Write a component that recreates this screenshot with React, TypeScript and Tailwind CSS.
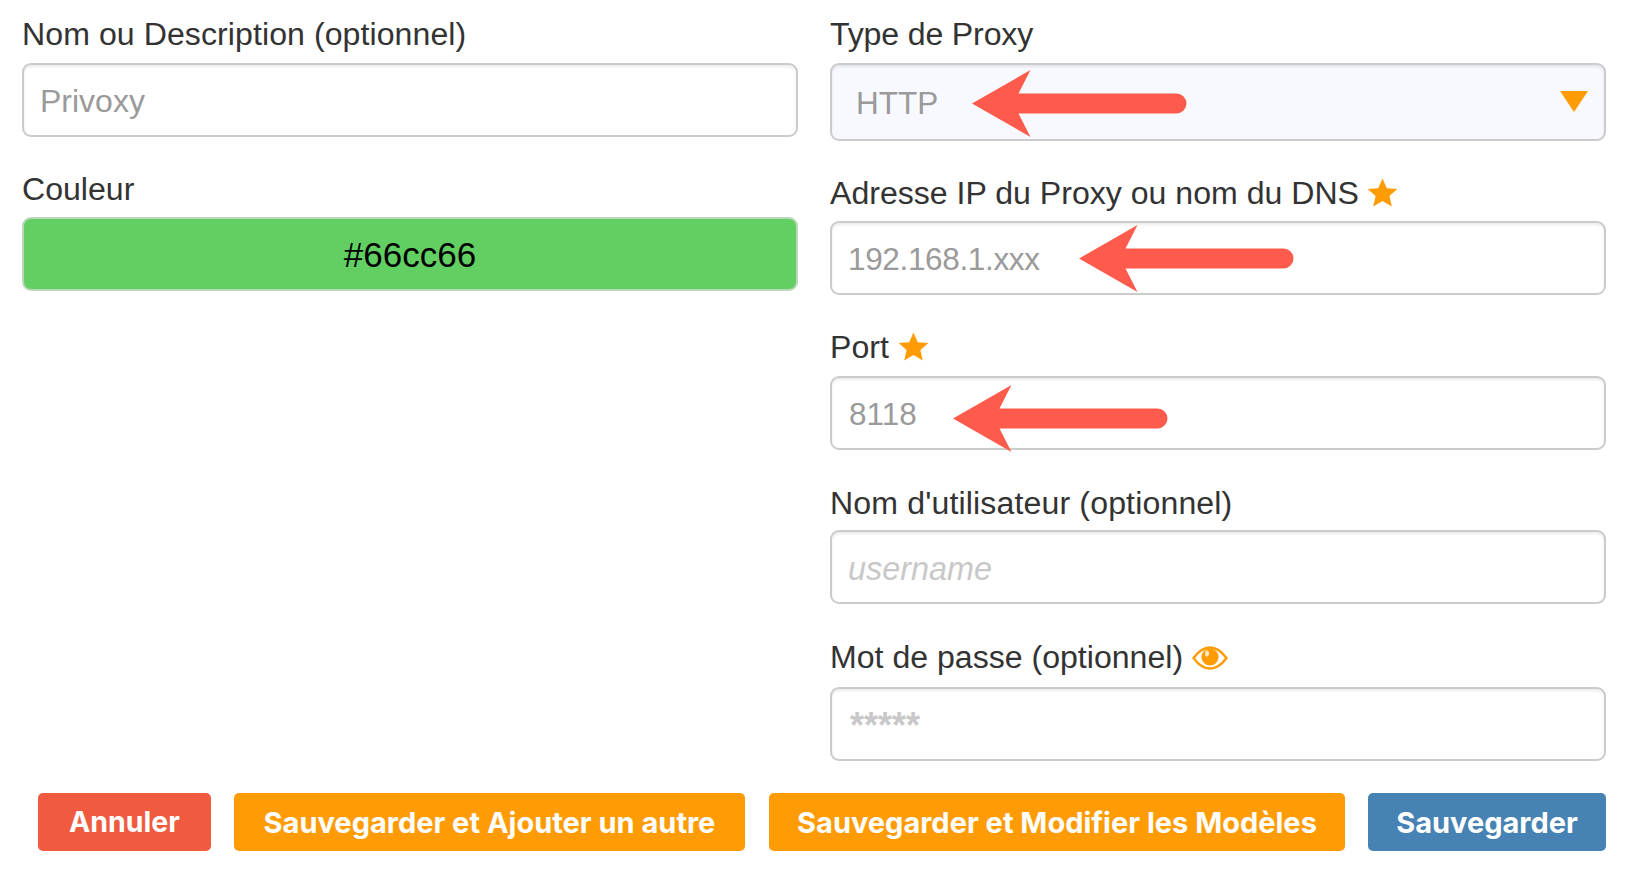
import React from "react";

function Arrow({ className }: { className: string }) {
  return (
    <svg className={`absolute ${className}`} width="215" height="67" viewBox="0 0 215 67" aria-hidden="true">
      <path d="M0 33.5 L58.5 0 L46.5 23.5 H204.5 A10 10 0 0 1 204.5 43.5 H46.5 L58.5 67 Z" fill="#ff5b4d" />
    </svg>
  );
}

function Star({ className = "" }: { className?: string }) {
  return (
    <svg className={className} width="31" height="29" viewBox="0 0 31 29" aria-hidden="true">
      <path
        d="M15.5 0.5 L19.8 10.2 L30.4 11.1 L22.4 18.1 L24.8 28.5 L15.5 23 L6.2 28.5 L8.6 18.1 L0.6 11.1 L11.2 10.2 Z"
        fill="#ff9c05"
      />
    </svg>
  );
}

function Eye() {
  return (
    <svg className="mt-[2px]" width="36" height="24" viewBox="0 0 36 24" aria-hidden="true">
      <path d="M1.5 12 C7 4.5 12.5 1.5 18 1.5 C23.5 1.5 29 4.5 34.5 12 C29 19.5 23.5 22.5 18 22.5 C12.5 22.5 7 19.5 1.5 12 Z" fill="none" stroke="#ff9c05" strokeWidth="2.4" />
      <circle cx="18" cy="11" r="8.6" fill="#ff9c05" />
      <ellipse cx="15" cy="7.5" rx="2" ry="3" fill="#ffe9c4" />
    </svg>
  );
}

const labelCls = "flex items-center gap-[9px] h-[40px] text-[32.1px] leading-[40px] text-[#333]";
const fieldCls =
  "relative flex items-center rounded-[9px] border-2 border-[#cbcbcb] pl-[16px] text-[31.5px] shadow-[inset_0_2px_3px_rgba(0,0,0,0.08)]";

export default function App() {
  return (
    <div className="w-[1626px] h-[874px] bg-white overflow-hidden pl-[22px] pr-[20px] pt-[14px] font-['Liberation_Sans',Arial,sans-serif]">
      <div className="grid grid-cols-[776px_776px] gap-x-[32px]">
        <div>
          <div className={`${labelCls} tracking-[0.07px]`}>Nom ou Description (optionnel)</div>
          <div className={`${fieldCls} mt-[9px] h-[74px] bg-white pt-[2px] text-[32px] text-[#9a9a9a]`}>Privoxy</div>
          <div className={`${labelCls} mt-[32px]`}>Couleur</div>
          <div className="mt-[8px] flex h-[74px] items-center justify-center rounded-[9px] border-2 border-[#bcd8bc] bg-[#62cf62] pt-[2px] text-[35px] text-black">
            #66cc66
          </div>
        </div>

        <div>
          <div className={`${labelCls} tracking-[-0.15px]`}>Type de Proxy</div>
          <div className={`${fieldCls} mt-[9px] h-[78px] bg-[#f8f9ff] pl-[24px] pt-[4px] text-[#9a9a9a]`}>
            HTTP
            <Arrow className="left-[140px] top-[5px]" />
            <svg className="absolute right-[16px] top-[26px]" width="28" height="21" viewBox="0 0 28 21" aria-hidden="true">
              <path d="M0 0 H28 L14 21 Z" fill="#ff9c05" />
            </svg>
          </div>
          <div className={`${labelCls} mt-[32px]`}>
            Adresse IP du Proxy ou nom du DNS <Star className="-mt-[2px] -ml-[1px]" />
          </div>
          <div className={`${fieldCls} mt-[8px] h-[74px] bg-white pt-[3px] tracking-[-0.35px] text-[#9a9a9a]`}>
            192.168.1.xxx
            <Arrow className="left-[247px] top-[2px]" />
          </div>
          <div className={`${labelCls} mt-[32px]`}>
            Port <Star className="-mt-[2px]" />
          </div>
          <div className={`${fieldCls} mt-[9px] h-[74px] bg-white pl-[17px] pt-[4px] text-[#9a9a9a]`}>
            8118
            <Arrow className="left-[121px] top-[7px]" />
          </div>
          <div className={`${labelCls} mt-[33px] tracking-[0.14px]`}>Nom d'utilisateur (optionnel)</div>
          <div className={`${fieldCls} mt-[7px] h-[74px] bg-white pt-[5px] text-[32.4px] italic text-[#c8c8c8]`}>username</div>
          <div className={`${labelCls} mt-[33px]`}>
            Mot de passe (optionnel) <Eye />
          </div>
          <div className={`${fieldCls} mt-[10px] h-[74px] items-start bg-white pl-[18px] pt-[10px] text-[36px] font-bold text-[#c8c8c8]`}>*****</div>
        </div>
      </div>

      <div className="mt-[32px] flex justify-end gap-[23px] font-['Inter',sans-serif] text-[29px] font-bold text-white">
        <div className="flex h-[58px] w-[173px] items-center justify-center rounded-[5px] bg-[#f05b3f] pt-[1px] text-[28.5px]">Annuler</div>
        <div className="flex h-[58px] w-[511px] items-center justify-center rounded-[5px] bg-[#ff9c05] pt-[1px]">Sauvegarder et Ajouter un autre</div>
        <div className="ml-[1px] flex h-[58px] w-[576px] items-center justify-center rounded-[5px] bg-[#ff9c05] pt-[1px]">Sauvegarder et Modifier les Modèles</div>
        <div className="flex h-[58px] w-[238px] items-center justify-center rounded-[5px] bg-[#4682b4] pt-[1px]">Sauvegarder</div>
      </div>
    </div>
  );
}
